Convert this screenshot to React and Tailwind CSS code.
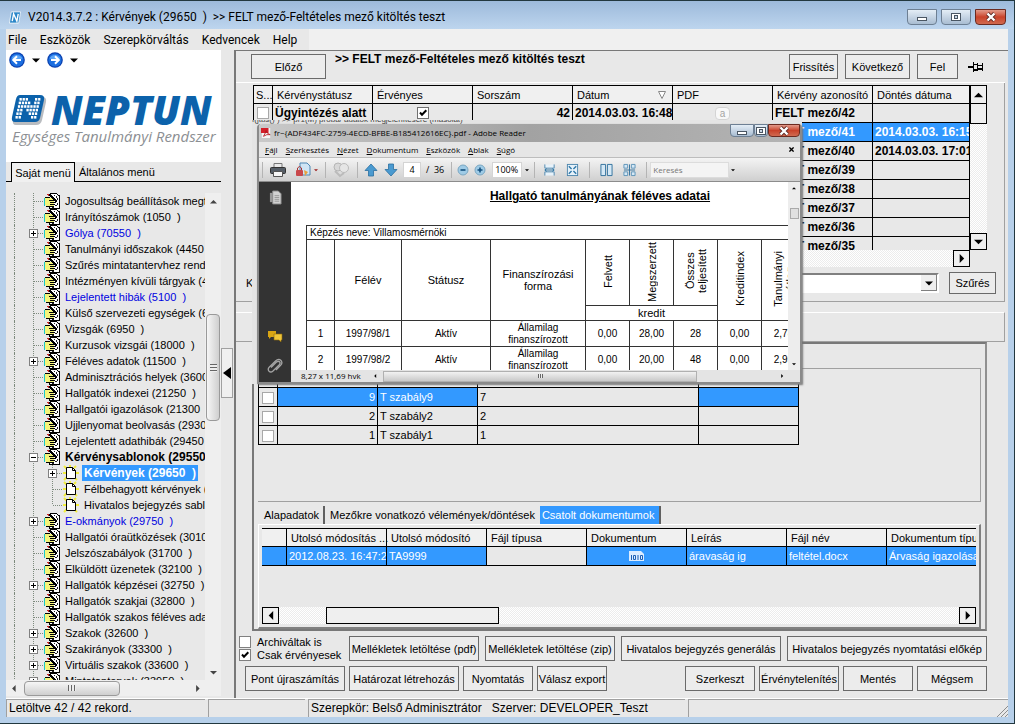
import React from "react";
import clsx from "clsx";

const TREE = [
  { label: "Jogosultság beállítások megtekintése (1000 )" },
  { label: "Irányítószámok (1050\u00a0 )" },
  { label: "Gólya (70550\u00a0 )", box: "plus", blue: true },
  { label: "Tanulmányi időszakok (4450\u00a0 )" },
  { label: "Szűrés mintatantervhez rendelt (4500 )" },
  { label: "Intézményen kívüli tárgyak (4700 )" },
  { label: "Lejelentett hibák (5100\u00a0 )", blue: true },
  { label: "Külső szervezeti egységek (6800 )" },
  { label: "Vizsgák (6950\u00a0 )" },
  { label: "Kurzusok vizsgái (18000\u00a0 )" },
  { label: "Féléves adatok (11500\u00a0 )", box: "plus" },
  { label: "Adminisztrációs helyek (3600\u00a0 )" },
  { label: "Hallgatók indexei (21250\u00a0 )" },
  { label: "Hallgatói igazolások (21300\u00a0 )" },
  { label: "Ujjlenyomat beolvasás (29300\u00a0 )" },
  { label: "Lejelentett adathibák (29450\u00a0 )" },
  { label: "Kérvénysablonok (29550\u00a0 )", box: "minus", bold: true },
  { label: "Kérvények (29650\u00a0 )", child: true, box: "plus", selected: true },
  { label: "Félbehagyott kérvények (29700 )", child: true },
  { label: "Hivatalos bejegyzés sablonok (29720 )", child: true, last: true },
  { label: "E-okmányok (29750\u00a0 )", box: "plus", blue: true },
  { label: "Hallgatói óraütközések (30100 )" },
  { label: "Jelszószabályok (31700\u00a0 )" },
  { label: "Elküldött üzenetek (32100\u00a0 )" },
  { label: "Hallgatók képzései (32750\u00a0 )", box: "plus" },
  { label: "Hallgatók szakjai (32800\u00a0 )" },
  { label: "Hallgatók szakos féléves adatai (32850 )" },
  { label: "Szakok (32600\u00a0 )", box: "plus" },
  { label: "Szakirányok (33300\u00a0 )", box: "plus" },
  { label: "Virtuális szakok (33600\u00a0 )", box: "plus" },
  { label: "Mintatantervek (33950\u00a0 )", box: "plus" },
];

const REQUESTS = [
  { id: 42, date: "2014.03.03. 16:48:12", decided: "" },
  { id: 41, date: "2014.03.03. 16:12:40", decided: "2014.03.03. 16:15:02", selected: true },
  { id: 40, date: "2014.03.03. 15:58:21", decided: "2014.03.03. 17:01:33" },
  { id: 39, date: "2014.03.03. 15:40:09", decided: "" },
  { id: 38, date: "2014.03.03. 15:22:51", decided: "" },
  { id: 37, date: "2014.03.03. 15:10:17", decided: "" },
  { id: 36, date: "2014.03.03. 14:55:30", decided: "" },
  { id: 35, date: "2014.03.03. 14:41:05", decided: "" },
];

const RULES = [
  { num: 9, name: "T szabály9", value: "7", selected: true },
  { num: 2, name: "T szabály2", value: "2" },
  { num: 1, name: "T szabály1", value: "1" },
];

const TERMS = [
  ["1", "1997/98/1", "Aktív", "0,00", "28,00", "28", "0,00", "2,78"],
  ["2", "1997/98/2", "Aktív", "0,00", "20,00", "48", "0,00", "2,95"],
];

const HATCH =
  "bg-[repeating-conic-gradient(#ffffff_0_25%,#ececec_0_50%)] bg-[length:2px_2px]";

const Button = ({ children, className, height = "h-[25px]" }) => (
  <button
    type="button"
    className={clsx(
      "shrink-0 whitespace-nowrap border border-[#6a6a6a] bg-[#ececec] text-center",
      height,
      className
    )}
  >
    {children}
  </button>
);

const Check = ({ id, label, defaultChecked, className }) => (
  <span className="relative inline-block h-3 w-3 shrink-0 align-middle">
    <input
      id={id}
      type="checkbox"
      aria-label={label}
      defaultChecked={defaultChecked}
      className={clsx("peer block h-3 w-3 appearance-none border bg-white", className)}
    />
    <svg
      viewBox="0 0 12 12"
      className="pointer-events-none absolute inset-0 hidden h-3 w-3 peer-checked:block"
    >
      <path d="M3 5.5 5 7.8 9.3 3.3" fill="none" stroke="#000" strokeWidth="2" />
    </svg>
  </span>
);

const Triangle = ({ dir, className, size = "h-[10px] w-[10px]" }) => (
  <svg viewBox="0 0 10 10" className={clsx("shrink-0", size, className)}>
    {dir === "up" && <path d="M0 8h10L5 3z" fill="currentColor" />}
    {dir === "down" && <path d="M0 3h10L5 8z" fill="currentColor" />}
    {dir === "left" && <path d="M8 0v10L3 5z" fill="currentColor" />}
    {dir === "right" && <path d="M3 0v10l5-5z" fill="currentColor" />}
  </svg>
);

const ScrollButton = ({ dir, label, className }) => (
  <button
    type="button"
    aria-label={label}
    className={clsx(
      "flex shrink-0 items-center justify-center border border-black bg-[#efefef]",
      className
    )}
  >
    <Triangle dir={dir} size="h-[9px] w-[9px]" />
  </button>
);

const WindowButtons = ({ small }) => {
  const box = small ? "h-[13px]" : "h-4";
  return (
    <div className={clsx("flex", small ? "" : "gap-1")}>
      <button
        type="button"
        aria-label="Kis méret"
        className={clsx(
          box,
          small ? "w-6" : "w-[30px]",
          "flex items-center justify-center rounded-b-sm border border-[#6d7f93] bg-linear-to-b from-[#e4edf6] to-[#a9bdd2]"
        )}
      >
        <svg viewBox="0 0 12 10" className="h-[10px] w-3">
          <rect x="1.5" y="5.5" width="9" height="3" fill="#fff" stroke="#4a5663" />
        </svg>
      </button>
      <button
        type="button"
        aria-label="Teljes méret"
        className={clsx(
          box,
          small ? "w-[14px]" : "w-[30px]",
          "flex items-center justify-center rounded-b-sm border border-[#6d7f93] bg-linear-to-b from-[#e4edf6] to-[#a9bdd2]"
        )}
      >
        <svg viewBox="0 0 12 10" className="h-[10px] w-3">
          <rect x="1.5" y="1.5" width="9" height="7" fill="#fff" stroke="#4a5663" />
          <rect x="4.5" y="3.5" width="3" height="3" fill="#c9d6e4" stroke="#4a5663" />
        </svg>
      </button>
      <button
        type="button"
        aria-label="Bezárás"
        className={clsx(
          box,
          small ? "w-8" : "w-[31px]",
          "flex items-center justify-center rounded-b-sm border border-[#6b2a20] bg-linear-to-b from-[#e19a8b] via-[#c9422a] to-[#d0694f]"
        )}
      >
        <svg viewBox="0 0 12 10" className="h-[10px] w-3">
          <path d="m2.500 1.500 7 7m0-7-7 7" stroke="#5c2a26" strokeWidth="4" />
          <path d="m2.500 1.500 7 7m0-7-7 7" stroke="#fff" strokeWidth="2.400" />
        </svg>
      </button>
    </div>
  );
};

const DOTS = [
  "1110011",
  "1111011",
  "1111111",
  "1101111",
  "1100111",
  "1100011",
];

const NeptunMark = ({ className }) => (
  <svg viewBox="0 0 36 32" className={className}>
    <path d="M10 3h21q5 0 4 5l-4 18q-1 5-6 5H5q-4 0-3-5L6 8q1-5 4-5z" fill="#b9bcc0" />
    <path d="M9 1h20q5 0 4 5l-4 18q-1 4-5 4H4q-4 0-3-5L5 5q1-4 4-4z" fill="#0c62ab" />
    {DOTS.map((row, r) =>
      row
        .split("")
        .map((on, c) =>
          on === "1" ? (
            <rect
              key={`${r}-${c}`}
              x={8.5 + c * 3.1 - r * 0.8}
              y={4 + r * 3.6}
              width="2.300"
              height="2.600"
              fill="#fff"
            />
          ) : null
        )
    )}
  </svg>
);

const NavArrow = ({ dir, label }) => (
  <button type="button" aria-label={label} className="h-4 w-4">
    <svg viewBox="0 0 16 16" className="h-4 w-4">
      <circle cx="8" cy="8" r="7.800" fill="#0a3fae" />
      <circle cx="8" cy="8" r="6.600" fill="#1c6fe0" />
      <path d="M2.500 6.500a6 6 0 0 1 11 0q-5 2-11 0z" fill="#5aa3f5" />
      <path
        d={dir === "left" ? "M12 8H4.500M8 4.200 4.200 8 8 11.800" : "M4 8h7.500M8 4.200 11.800 8 8 11.800"}
        fill="none"
        stroke="#fff"
        strokeWidth="2"
      />
    </svg>
  </button>
);

const HandIcon = () => (
  <svg viewBox="0 0 16 16" shapeRendering="crispEdges" className="h-4 w-4 shrink-0">
    <path d="M7 1h6v2h2v12H6v-3h1z" fill="#fff" />
    <path d="M6 0h7v1H6zM13 1h1v1h-1zM14 2h2v1h-2zM15 3h1v12h-1zM5 15h11v1H5zM5 13h1v2H5z" fill="#000" />
    <path d="M1 5h7v1h2v7H2v-1H1z" fill="#f4f47a" />
    <path d="M0 5h1v8H0z" fill="#19c8c8" />
    <path d="M2 13h8v1H2zM1 4h5v1H1zM5 7h5v1H5zM6 9h6v1H6zM6 11h5v1H6z" fill="#000" />
    <path d="M5 1h2v1h1v1h1v1h1v1h1v1h1v1h1v2h-2V8h-1V7H9V6H8V5H7V4H6V3H5z" fill="#000" />
    <path d="M3 1h2v1H3zM4 2h1v1H4z" fill="#c22" />
    <path d="M10 2h1v1h-1zM12 3h1v2h-1zM13 5h1v2h-1zM11 12h2v1h-2zM13 10h1v2h-1zM8 14h2v1H8z" fill="#222" />
  </svg>
);

const PageIcon = () => (
  <svg viewBox="0 0 16 16" className="h-4 w-4 shrink-0">
    <path d="M1 1l3 3M13 1l-2 2M0 8h3M12 8h4M1 15l3-3M14 15l-2-2M7 0v2" stroke="#f2ee3a" strokeWidth="2" />
    <path d="M3.500 2.500h6l3 3v8h-9z" fill="#fff" stroke="#000" />
    <path d="M9.500 2.500v3h3" fill="none" stroke="#000" />
  </svg>
);

const Branch = ({ box, last, through }) => (
  <svg viewBox="0 0 16 16" shapeRendering="crispEdges" className="h-4 w-4 shrink-0">
    <path d={last ? "M5.500 0v8" : "M5.500 0v16"} stroke="#7d8a7d" strokeDasharray="1 1" />
    {!through && <path d="M6 8.500h10" stroke="#7d8a7d" strokeDasharray="1 1" />}
    {box && <rect x="1.500" y="4.500" width="8" height="8" fill="#fff" stroke="#808080" />}
    {box && <path d="M3 8.500h5" stroke="#000" />}
    {box === "plus" && <path d="M5.500 6v5" stroke="#000" />}
  </svg>
);

const TreeRow = ({ item }) => (
  <li className="flex h-4 items-center whitespace-nowrap">
    <span className="h-4 w-[9px] shrink-0 border-r border-dotted border-[#7d8a7d]" />
    <span className="w-[13px] shrink-0" />
    <Branch box={item.child ? null : item.box} through={item.child} />
    {item.child && (
      <span className="flex shrink-0 pl-[3px]">
        <Branch box={item.box} last={item.last} />
      </span>
    )}
    {item.child ? <PageIcon /> : <HandIcon />}
    <a
      href="#"
      className={clsx(
        "ml-[3px] px-[2px] leading-4",
        item.blue && "text-[#0000e0]",
        item.bold && "text-[12px] font-bold",
        item.selected && "bg-[#3399ff] text-[12px] font-bold text-white"
      )}
    >
      {item.label}
    </a>
  </li>
);

const Sidebar = () => (
  <aside className="flex w-[215px] shrink-0 flex-col">
    <div className="h-[112px] shrink-0 bg-white">
      <div className="flex items-center pl-[3px] pt-[2px]">
        <NavArrow dir="left" label="Vissza" />
        <Triangle dir="down" size="h-2 w-2" className="ml-[7px] mr-[7px]" />
        <NavArrow dir="right" label="Előre" />
        <Triangle dir="down" size="h-2 w-2" className="ml-[7px]" />
      </div>
      <div className="mt-6 flex h-9 items-center pl-[5px]">
        <NeptunMark className="h-8 w-9" />
        <span className="ml-1 font-['Open_Sans'] text-[40px] font-extrabold italic leading-9 text-[#0c62ab]">
          NEPTUN
        </span>
      </div>
      <p className="whitespace-nowrap pl-[6px] font-['Open_Sans'] text-[15px] italic leading-4 text-[#8c8f93]">
        Egységes Tanulmányi Rendszer
      </p>
    </div>
    <div className="flex h-5 shrink-0">
      <span className="w-[5px] border-b border-black" />
      <button type="button" className="w-[64px] whitespace-nowrap border-x border-t border-black bg-[#f0f0f0]">
        Saját menü
      </button>
      <button type="button" className="flex-1 border-b border-black pl-1 text-left">
        Általános menü
      </button>
    </div>
    <div className="mt-[11px] flex min-h-0 flex-1">
      <ul className="min-w-0 flex-1 overflow-hidden">
        {TREE.map((item) => (
          <TreeRow key={item.label} item={item} />
        ))}
      </ul>
      <div className="flex w-4 shrink-0 flex-col items-center bg-[#efefef]">
        <Triangle dir="up" size="h-[7px] w-[7px]" className="mt-[5px] text-[#444]" />
        <div className="mt-[109px] flex h-[107px] w-[14px] items-center justify-center rounded-sm border border-[#9a9a9a] bg-linear-to-r from-[#f6f6f6] to-[#cfcfcf]">
          <span className="h-2 w-[7px] bg-[repeating-linear-gradient(#666_0_1px,#eee_1px_3px)]" />
        </div>
        <Triangle dir="down" size="h-[7px] w-[7px]" className="mb-1 mt-auto text-[#444]" />
      </div>
    </div>
    <div className="mb-[2px] flex h-4 shrink-0 items-center bg-[#efefef] pr-5">
      <Triangle dir="left" size="h-[7px] w-[7px]" className="ml-1 text-[#444]" />
      <div className="ml-[7px] flex h-[15px] w-24 items-center justify-center rounded-sm border border-[#9a9a9a] bg-linear-to-b from-[#f6f6f6] to-[#cfcfcf]">
        <span className="h-[6px] w-2 bg-[repeating-linear-gradient(90deg,#666_0_1px,#eee_1px_3px)]" />
      </div>
      <Triangle dir="right" size="h-[7px] w-[7px]" className="ml-auto text-[#444]" />
    </div>
  </aside>
);

const Splitter = () => (
  <div className="w-[13px] shrink-0 pt-[298px]">
    <button
      type="button"
      aria-label="Menü elrejtése"
      className="flex h-[50px] w-3 items-center justify-center border border-[#a0a0a0] bg-[#f0f0f0]"
    >
      <svg viewBox="0 0 8 12" className="h-3 w-2">
        <path d="M8 0v12L0 6z" />
      </svg>
    </button>
  </div>
);

const TH = "border-b border-r border-black bg-[#f0f0f0] pl-1 text-left font-normal";
const TD = "overflow-hidden whitespace-nowrap border-b border-r border-black px-[2px]";

const RequestGrid = () => (
  <div className="ml-[7px] mr-[9px] border-l border-black">
    <div className="flex h-[165px]">
      <div className="min-w-0 flex-1 overflow-hidden border-t border-black">
        <table className="w-full table-fixed border-separate border-spacing-0">
          <colgroup>
            <col className="w-[19px]" />
            <col className="w-[100px]" />
            <col className="w-[100px]" />
            <col className="w-[100px]" />
            <col className="w-[100px]" />
            <col className="w-[100px]" />
            <col className="w-[100px]" />
            <col />
          </colgroup>
          <thead>
            <tr className="h-[18px] whitespace-nowrap">
              <th className="border-b border-r border-black bg-[#f0f0f0] px-[2px] text-left font-normal">
                S...
              </th>
              <th className={TH}>Kérvénystátusz</th>
              <th className={TH}>Érvényes</th>
              <th className={TH}>Sorszám</th>
              <th className={TH}>
                <span className="flex items-center justify-between pr-[6px]">
                  Dátum
                  <svg viewBox="0 0 8 8" className="h-2 w-2">
                    <path d="M.5.5h7l-3.500 7z" fill="#fff" stroke="#888" />
                  </svg>
                </span>
              </th>
              <th className={TH}>PDF</th>
              <th className={TH}>Kérvény azonosító</th>
              <th className={TH}>Döntés dátuma</th>
            </tr>
          </thead>
          <tbody>
            {REQUESTS.map((r) => (
              <tr
                key={r.id}
                className={clsx(
                  "h-[19px] text-[12px] font-bold",
                  r.selected && "bg-[#3399ff] text-white"
                )}
              >
                <td className={clsx(TD, "text-center leading-3")}>
                  <Check label={`Kijelölés ${r.id}`} className="border-[#a8a8a8]" />
                </td>
                <td className={TD}>Ügyintézés alatt</td>
                <td className={clsx(TD, "text-center leading-3")}>
                  <Check label={`Érvényes ${r.id}`} defaultChecked className="border-[#707070]" />
                </td>
                <td className={clsx(TD, "text-right")}>{r.id}</td>
                <td className={TD}>{r.date}</td>
                <td className={clsx(TD, "text-center leading-3")}>
                  <span className="inline-block h-[13px] w-[15px] rounded-sm border border-[#d4d4d4] bg-[#f8f8f8] align-middle text-[10px] font-normal leading-[11px] text-[#a4a4a4]">
                    a
                  </span>
                </td>
                <td className={TD}>FELT mező/{r.id}</td>
                <td className={TD}>{r.decided}</td>
              </tr>
            ))}
          </tbody>
        </table>
      </div>
      <div className={clsx("flex w-[17px] shrink-0 flex-col", HATCH)}>
        <ScrollButton dir="up" label="Fel" className="h-[19px]" />
        <div className="h-5 border-x border-b border-black bg-[#efefef]" />
        <ScrollButton dir="down" label="Le" className="mt-auto h-[17px]" />
      </div>
    </div>
    <div className="flex h-[17px]">
      <div className={clsx("flex flex-1 justify-between", HATCH)}>
        <ScrollButton dir="left" label="Balra" className="w-[17px]" />
        <ScrollButton dir="right" label="Jobbra" className="w-[17px]" />
      </div>
      <div className="w-[17px]" />
    </div>
  </div>
);

const RulesGrid = () => (
  <table className="w-[541px] table-fixed border-separate border-spacing-0 border-l border-black">
    <colgroup>
      <col className="w-[19px]" />
      <col className="w-[100px]" />
      <col className="w-[100px]" />
      <col className="w-[221px]" />
      <col className="w-[100px]" />
    </colgroup>
    <thead>
      <tr className="h-[19px]">
        <th className={TH}></th>
        <th className={TH}></th>
        <th className={TH}></th>
        <th className={TH}></th>
        <th className={TH}></th>
      </tr>
    </thead>
    <tbody>
      {RULES.map((r) => (
        <tr key={r.num} className="h-[19px]">
          <td className={clsx(TD, "text-center leading-3")}>
            <Check label={`Kijelölés ${r.name}`} className="border-[#a8a8a8]" />
          </td>
          <td className={clsx(TD, "text-right", r.selected && "bg-[#3399ff] text-white")}>{r.num}</td>
          <td className={clsx(TD, r.selected && "bg-[#3399ff] text-white")}>{r.name}</td>
          <td className={TD}>{r.value}</td>
          <td className={clsx(TD, r.selected && "bg-[#3399ff]")}></td>
        </tr>
      ))}
    </tbody>
  </table>
);

const DocumentGrid = () => (
  <div className="flex h-24 flex-col">
    <table className="w-full table-fixed border-separate border-spacing-0 border-t border-black">
      <colgroup>
        <col className="w-[25px]" />
        <col className="w-[100px]" />
        <col className="w-[100px]" />
        <col className="w-[100px]" />
        <col className="w-[100px]" />
        <col className="w-[100px]" />
        <col className="w-[100px]" />
        <col />
      </colgroup>
      <thead>
        <tr className="h-[18px] whitespace-nowrap">
          <th className={TH}></th>
          <th className={TH}>Utolsó módosítás ...</th>
          <th className={TH}>Utolsó módosító</th>
          <th className={TH}>Fájl típusa</th>
          <th className={TH}>Dokumentum</th>
          <th className={TH}>Leírás</th>
          <th className={TH}>Fájl név</th>
          <th className="overflow-hidden border-b border-black bg-[#f0f0f0] pl-1 text-left font-normal">
            Dokumentum típu...
          </th>
        </tr>
      </thead>
      <tbody>
        <tr className="h-[19px] bg-[#3399ff] text-white">
          <td className={TD}></td>
          <td className={TD}>2012.08.23. 16:47:25</td>
          <td className={TD}>TA9999</td>
          <td className={clsx(TD, "bg-[#e8e8e8]")}></td>
          <td className={TD}>
            <svg viewBox="0 0 16 12" className="mx-auto h-3 w-4">
              <path d="M0 1h12l3 3v7H0z" fill="#dcecff" />
              <path
                d="M2.500 5v5M4.500 5.500h2v4h-2zM9 5v5M11.500 5.500h2v4h-2z"
                fill="none"
                stroke="#1d5fb4"
              />
            </svg>
          </td>
          <td className={TD}>áravaság ig</td>
          <td className={TD}>feltétel.docx</td>
          <td className="overflow-hidden whitespace-nowrap border-b border-black pl-[2px]">
            Árvaság igazolása
          </td>
        </tr>
      </tbody>
    </table>
    <div className={clsx("mt-auto flex h-[17px]", HATCH)}>
      <ScrollButton dir="left" label="Balra" className="w-[17px]" />
      <div className="ml-[47px] w-[173px] border border-black bg-[#efefef]" />
      <ScrollButton dir="right" label="Jobbra" className="ml-auto w-[17px]" />
    </div>
  </div>
);

const PinIcon = () => (
  <svg viewBox="0 0 16 12" shapeRendering="crispEdges" className="h-3 w-4">
    <path d="M0 5h5v2H0zM5 1h1v10H5zM6 3h3v1H6zM6 8h3v2H6zM9 2h1v8H9zM10 4h4v1h-4zM10 7h4v2h-4zM14 2h1v8h-1z" />
  </svg>
);

const Main = () => (
  <main className="flex min-w-0 flex-1 flex-col border-l-2 border-t border-[#787878]">
    <div className="mr-[3px] flex h-8 shrink-0 items-start border-b border-white pl-[15px] pt-[3px]">
      <Button className="w-[75px]">Előző</Button>
      <h1 className="ml-[9px] text-[12px] font-bold leading-[10px]">
        &gt;&gt; FELT mező-Feltételes mező kitöltés teszt
      </h1>
      <div className="ml-auto flex items-center gap-[7px] pr-[21px]">
        <Button className="w-[49px]">Frissítés</Button>
        <Button className="w-[65px]">Következő</Button>
        <Button className="w-[41px]">Fel</Button>
        <button type="button" aria-label="Rögzítés" className="ml-[3px]">
          <PinIcon />
        </button>
      </div>
    </div>
    <section className="mr-[3px] shrink-0 border-b border-r border-[#a0a0a0] pb-[7px] pl-[10px] pr-2 pt-[2px]">
      <RequestGrid />
      <div className="mt-[5px] flex items-center">
        <label htmlFor="search" className="w-14">
          Keresés
        </label>
        <span className="relative flex-1">
          <select
            id="search"
            className="block h-5 w-full appearance-none border-2 border-b-white border-l-[#808080] border-r-white border-t-[#808080] bg-white"
          />
          <span className="pointer-events-none absolute bottom-[2px] right-[2px] top-[2px] flex w-4 items-center justify-center border-b border-r border-[#808080] bg-[#efefef]">
            <Triangle dir="down" size="h-2 w-2" />
          </span>
        </span>
        <Button className="ml-[10px] w-[47px]" height="h-[22px]">
          Szűrés
        </Button>
      </div>
    </section>
    <section className="mr-[3px] mt-[10px] h-[30px] shrink-0 border-b border-r border-t border-[#a0a0a0] border-t-white" />
    <section className="ml-4 mr-[21px] flex min-h-0 flex-1 flex-col border-2 border-[#787878] border-r-[#909090] px-1 pt-6">
      <div className="min-h-0 flex-1 overflow-hidden border border-[#a0a0a0] border-l-0">
        <RulesGrid />
      </div>
      <div className="mt-1 flex h-[18px] shrink-0 items-stretch">
        <button type="button" className="border-r-2 border-[#606060] pl-[6px] pr-1">
          Alapadatok
        </button>
        <button type="button" className="px-[5px]">
          Mezőkre vonatkozó vélemények/döntések
        </button>
        <button
          type="button"
          className="w-[121px] border-r-2 border-[#606060] bg-[#3399ff] px-[2px] text-left text-white"
        >
          Csatolt dokumentumok
        </button>
      </div>
      <div className="shrink-0 border border-b-2 border-r-2 border-[#808080] border-l-white border-t-white p-[3px]">
        <DocumentGrid />
      </div>
    </section>
    <footer className="mt-[5px] flex shrink-0 flex-col gap-[5px] pb-[7px] pl-[3px] pr-[21px]">
      <div className="flex">
        <div className="flex w-[110px] shrink-0 flex-col justify-between whitespace-nowrap">
          <label htmlFor="archived" className="flex h-3 items-center gap-[6px]">
            <Check id="archived" label="Archiváltak is" className="border-[#808080]" />
            Archiváltak is
          </label>
          <label htmlFor="valid" className="flex h-3 items-center gap-[6px]">
            <Check id="valid" label="Csak érvényesek" defaultChecked className="border-[#808080]" />
            Csak érvényesek
          </label>
        </div>
        <div className="flex flex-1 justify-between">
          <Button className="w-[130px]">Mellékletek letöltése (pdf)</Button>
          <Button className="w-[130px]">Mellékletek letöltése (zip)</Button>
          <Button className="w-[160px]">Hivatalos bejegyzés generálás</Button>
          <Button className="w-[200px]">Hivatalos bejegyzés nyomtatási előkép</Button>
        </div>
      </div>
      <div className="flex gap-1 pl-[6px]">
        <Button className="w-[100px]">Pont újraszámítás</Button>
        <Button className="w-[110px]">Határozat létrehozás</Button>
        <Button className="w-[70px]">Nyomtatás</Button>
        <Button className="w-[70px]">Válasz export</Button>
        <Button className="ml-auto w-[70px]">Szerkeszt</Button>
        <Button className="w-[80px]">Érvénytelenítés</Button>
        <Button className="w-[70px]">Mentés</Button>
        <Button className="w-[70px]">Mégsem</Button>
      </div>
    </footer>
  </main>
);

const PDF_MENU = ["Fájl", "Szerkesztés", "Nézet", "Dokumentum", "Eszközök", "Ablak", "Súgó"];

const BigArrow = ({ up }) => (
  <svg viewBox="0 0 14 14" className="h-[14px] w-[14px]">
    <path
      d={up ? "M7 1l6 6.500H9.500V13h-5V7.500H1z" : "M7 13l6-6.500H9.500V1h-5v5.500H1z"}
      fill="#4a9ad0"
      stroke="#2b6f9f"
      strokeWidth=".8"
    />
  </svg>
);

const ZoomDot = ({ plus }) => (
  <svg viewBox="0 0 12 12" className="h-3 w-3">
    <circle cx="6" cy="6" r="5" fill="#9fcbe6" stroke="#7ba7c2" />
    <path d={plus ? "M3.500 6h5M6 3.500v5" : "M3.500 6h5"} stroke="#14507f" strokeWidth="1.600" />
  </svg>
);

const Divider = () => <span className="h-4 border-l border-[#b4b4b4]" />;

const PdfToolbar = () => (
  <div className="flex h-6 items-center border-b border-[#8c8c8c] bg-linear-to-b from-[#f4f4f4] to-[#cfcfcf] pl-[3px] text-[9px]">
    <Divider />
    <button type="button" aria-label="Nyomtatás" className="ml-[7px]">
      <svg viewBox="0 0 16 14" className="h-[14px] w-4">
        <path d="M4 .5h8V5H4z" fill="#e9e9e9" stroke="#777" />
        <rect x=".5" y="4.500" width="15" height="6" rx="1" fill="#555d66" stroke="#333" />
        <path d="M3.500 8.500h9v5h-9z" fill="#f7f7f7" stroke="#555" />
      </svg>
    </button>
    <button type="button" aria-label="Megosztás" className="ml-[9px] flex items-center gap-[3px]">
      <svg viewBox="0 0 16 16" className="h-4 w-4">
        <path d="M5 1h7l3 3v9H5z" fill="#cfe4f5" stroke="#4f87b5" />
        <rect x="1" y="8" width="7" height="6" rx="1" fill="#c9484b" />
        <path d="M2.500 8V6q2-3 4 0v2" fill="none" stroke="#a33" />
        <path d="M9 8l4 2-3 4z" fill="#e8a33c" />
      </svg>
      <Triangle dir="down" size="h-1 w-1" className="text-[#9a1c1c]" />
    </button>
    <span className="ml-[7px]" />
    <Divider />
    <button type="button" aria-label="Gyűjtemény" className="ml-[6px]">
      <svg viewBox="0 0 18 16" className="h-4 w-[18px]">
        <circle cx="6" cy="5" r="4" fill="#d8d8d8" stroke="#b5b5b5" />
        <circle cx="12" cy="6" r="4.500" fill="#e6e6e6" stroke="#bbb" />
        <path d="M3 9l5 5 4-3" fill="none" stroke="#bbb" strokeWidth="2" />
      </svg>
    </button>
    <span className="ml-[7px]" />
    <Divider />
    <div className="ml-[6px] flex items-center gap-[6px]">
      <button type="button" aria-label="Előző oldal">
        <BigArrow up />
      </button>
      <button type="button" aria-label="Következő oldal">
        <BigArrow />
      </button>
    </div>
    <input
      aria-label="Oldal"
      defaultValue="4"
      className="ml-[5px] h-4 w-[18px] border border-[#d4d4d4] bg-white text-center"
    />
    <span className="ml-[5px] whitespace-nowrap">/&nbsp; 36</span>
    <span className="ml-[7px]" />
    <Divider />
    <button type="button" aria-label="Kicsinyítés" className="ml-[5px]">
      <ZoomDot />
    </button>
    <button type="button" aria-label="Nagyítás" className="ml-[5px]">
      <ZoomDot plus />
    </button>
    <select
      aria-label="Nagyítás mértéke"
      className="ml-[6px] h-4 w-[30px] appearance-none border border-[#d4d4d4] bg-white px-[2px] text-[9px]"
    >
      <option>100%</option>
    </select>
    <Triangle dir="down" size="h-1 w-1" className="ml-[3px]" />
    <span className="ml-[5px]" />
    <Divider />
    <div className="ml-[8px] flex items-center gap-[10px]">
      <svg viewBox="0 0 14 14" className="h-[14px] w-[13px]">
        <path d="M2 1v4h10V1M2 13V9h10v4" fill="#e7f2fa" stroke="#4d86ad" />
        <path d="M2 7h10M4 5.500 2 7l2 1.500M10 5.500 12 7l-2 1.500" fill="none" stroke="#2f77a8" />
      </svg>
      <svg viewBox="0 0 14 14" className="h-[14px] w-[13px]">
        <rect x="1.500" y="1" width="11" height="12" fill="#e7f2fa" stroke="#4d86ad" />
        <path d="M3 3l3 3M11 3 8 6M3 11l3-3M11 11 8 8" stroke="#2f77a8" strokeWidth="1.500" />
      </svg>
      <Divider />
      <svg viewBox="0 0 14 14" className="h-[14px] w-[13px]">
        <path d="M1 1h5v12H1zM8 1h5v12H8z" fill="#d5e8f5" stroke="#2f6f9c" />
      </svg>
      <svg viewBox="0 0 14 14" className="h-[14px] w-[13px]">
        <path d="M1 1h4v4H1zM9 1h4v4H9zM1 9h4v4H1zM9 9h4v4H9z" fill="#d5e8f5" stroke="#5c93b8" />
        <path d="M1 7h12M7 1v12" stroke="#2f6f9c" />
      </svg>
      <Divider />
    </div>
    <input
      aria-label="Keresés"
      placeholder="Keresés"
      className="ml-[3px] h-4 w-[79px] border border-[#dcdcdc] bg-[#f4f4f4] px-[2px] text-[8px] placeholder:text-[#777]"
    />
    <Triangle dir="down" size="h-1 w-1" className="ml-[2px]" />
  </div>
);

const PCELL = "border-b border-r border-[#333] p-0 text-center font-normal";
const UPRIGHT = "inline-block rotate-180 whitespace-nowrap leading-3 [writing-mode:vertical-rl]";

const PdfPage = () => (
  <div className="min-w-0 flex-1 overflow-hidden bg-white">
    <div className="ml-[15px] w-[588px]">
      <h2 className="pt-[6px] text-center text-[12px] font-bold leading-4 underline">
        Hallgató tanulmányának féléves adatai
      </h2>
      <table className="mt-[21px] w-full table-fixed border-separate border-spacing-0 border-l border-t border-[#333] text-[10px] leading-3">
        <colgroup>
          <col className="w-[28px]" />
          <col className="w-[67px]" />
          <col className="w-[89px]" />
          <col className="w-[95px]" />
          <col className="w-[44px]" />
          <col className="w-[44px]" />
          <col className="w-[44px]" />
          <col className="w-[44px]" />
          <col className="w-[44px]" />
          <col />
        </colgroup>
        <thead>
          <tr className="h-[14px]">
            <th
              colSpan={10}
              className="border-b border-r border-[#333] py-0 pl-[3px] text-left font-normal"
            >
              Képzés neve: Villamosmérnöki
            </th>
          </tr>
          <tr className="h-[66px] text-[11px]">
            <th rowSpan={2} className={PCELL}></th>
            <th rowSpan={2} className={PCELL}>Félév</th>
            <th rowSpan={2} className={PCELL}>Státusz</th>
            <th rowSpan={2} className={PCELL}>Finanszírozási<br />forma</th>
            <th className={PCELL}><span className={UPRIGHT}>Felvett</span></th>
            <th className={PCELL}><span className={UPRIGHT}>Megszerzett</span></th>
            <th className={PCELL}>
              <span className={UPRIGHT}>Összes<br />teljesített</span>
            </th>
            <th rowSpan={2} className={PCELL}><span className={UPRIGHT}>Kreditindex</span></th>
            <th rowSpan={2} className={PCELL}>
              <span className={UPRIGHT}>Tanulmányi<br />átlag</span>
            </th>
            <th rowSpan={2} className={PCELL}></th>
          </tr>
          <tr className="h-[15px] text-[11px]">
            <th colSpan={3} className={PCELL}>kredit</th>
          </tr>
        </thead>
        <tbody>
          {TERMS.map((t) => (
            <tr key={t[0]} className="h-[26px]">
              <td className={PCELL}>{t[0]}</td>
              <td className={PCELL}>{t[1]}</td>
              <td className={PCELL}>{t[2]}</td>
              <td className={PCELL}>Államilag<br />finanszírozott</td>
              {t.slice(3).map((v, i) => (
                <td key={i} className={PCELL}>{v}</td>
              ))}
              <td className={PCELL}></td>
            </tr>
          ))}
        </tbody>
      </table>
    </div>
  </div>
);

const PdfWindow = () => (
  <div className="absolute left-[252px] top-[119px] w-[550px] bg-[#e4e4e4]">
    <div className="flex h-1 items-end overflow-hidden whitespace-nowrap text-[8px] leading-[8px] text-[#444]">
      f(jtbs() ) &gt;&gt; pr1(M) próba/ adatok megjelenítésére (másolat)
    </div>
    <div className="ml-[5px] flex flex-col rounded-t border-b-2 border-l-2 border-r-2 border-[#8a8a8a] font-['Open_Sans'] shadow-[1px_1px_2px_#777]">
      <div className="flex h-[18px] items-center rounded-t bg-linear-to-r from-[#c9c9c9] via-[#a2a2a2] to-[#b4b4b4] pl-[2px] text-black">
        <svg viewBox="0 0 12 12" className="h-[10px] w-[10px]">
          <path d="M1 0h10v12H1z" fill="#f5f5f5" />
          <path d="M0 0h9v6H0z" fill="#d3202a" />
          <path d="M3 10q3-5 3-7 1 4 5 5-4-1-8 2" fill="none" stroke="#b3131c" />
        </svg>
        <span className="ml-[3px] whitespace-nowrap text-[8px]">
          fr~&#123;ADF434FC-2759-4ECD-BFBE-B185412616EC&#125;.pdf - Adobe Reader
        </span>
        <div className="ml-auto self-start">
          <WindowButtons small />
        </div>
      </div>
      <div className="flex h-4 items-center gap-2 border-b border-[#bdbdbd] bg-[#e6e6e6] px-[6px] text-[8px]">
        {PDF_MENU.map((m) => (
          <button key={m} type="button" className="whitespace-nowrap">
            <u>{m[0]}</u>
            {m.slice(1)}
          </button>
        ))}
        <button type="button" aria-label="Dokumentum bezárása" className="ml-auto">
          <svg viewBox="0 0 6 6" className="h-[5px] w-[5px]">
            <path d="m.5.5 5 5m0-5-5 5" stroke="#000" strokeWidth="1.600" />
          </svg>
        </button>
      </div>
      <PdfToolbar />
      <div className="flex h-[200px]">
        <div className="flex w-8 shrink-0 flex-col items-center bg-[#333]">
          <svg viewBox="0 0 14 16" className="mt-2 h-[15px] w-[13px]">
            <path d="M1 3h8v10H1z" fill="#999" />
            <path d="M4 1h6l3 3v11H4z" fill="#d2d2d2" stroke="#888" />
            <path d="M6 6h5M6 8h5M6 10h5M6 12h5" stroke="#888" strokeWidth=".8" />
          </svg>
          <svg viewBox="0 0 16 12" className="mt-auto h-3 w-4">
            <path d="M1 1h8v6H4L2 9V7H1z" fill="#d9a514" />
            <path d="M7 4h8v6h-1v2l-2-2H7z" fill="#f0c63a" stroke="#8d6a0c" strokeWidth=".6" />
          </svg>
          <svg viewBox="0 0 16 16" className="mb-2 mt-4 h-4 w-4">
            <path
              d="M4 9.500 9.500 4q2-1.500 3.200 0 1 1.200-.4 2.800L6 13q-2.200 2-4 .2-1.600-1.900.2-4L8.500 3q3-2.800 5.500-.6 2 2.600-.4 5L9 12"
              fill="none"
              stroke="#a5a5a5"
              strokeWidth="1.300"
            />
          </svg>
        </div>
        <div className="flex min-w-0 flex-1 flex-col">
          <div className="flex h-[188px] font-['Liberation_Sans',Arial,sans-serif]">
            <PdfPage />
            <div className="flex w-3 shrink-0 flex-col items-center bg-[#ededed]">
              <Triangle dir="up" size="h-1 w-1" className="mt-1" />
              <div className="mt-[18px] h-[11px] w-[9px] border border-[#aaa] bg-[#e0e0e0]" />
              <Triangle dir="down" size="h-1 w-1" className="mb-1 mt-auto" />
            </div>
          </div>
          <div className="flex h-3 items-center bg-[#e4e4e4] pl-[10px] text-[8px]">
            <span className="w-[72px] whitespace-nowrap">8,27 x 11,69 hvk</span>
            <Triangle dir="left" size="h-1 w-1" />
            <div className="ml-[6px] flex h-[11px] w-[314px] items-center justify-center border border-[#b0b0b0] bg-linear-to-b from-[#f2f2f2] to-[#c9c9c9]">
              <span className="h-1 w-[5px] bg-[repeating-linear-gradient(90deg,#666_0_1px,#eee_1px_2px)]" />
            </div>
            <Triangle dir="right" size="h-1 w-1" className="ml-auto mr-4" />
          </div>
        </div>
      </div>
    </div>
  </div>
);

const MENU = ["File", "Eszközök", "Szerepkörváltás", "Kedvencek", "Help"];

const App = () => {
  return (
    <div className="relative flex h-screen flex-col overflow-hidden border-b border-r border-t border-[#22383f] bg-[#b7d0ea] font-['Liberation_Sans',Arial,sans-serif] text-[11px] leading-[14px] text-black">
      <header className="flex h-7 shrink-0 items-center bg-linear-to-b from-[#9dbadb] to-[#bdd5ee] px-2 pt-[4px] font-['Roboto'] text-[12px]">
        <svg viewBox="0 0 14 14" className="h-[13px] w-[14px]">
          <path d="M3 1h10l-2 12H1z" fill="#2a86c8" stroke="#fff" strokeWidth=".8" />
          <path d="m4 11 1.500-8 3.500 8L10.500 3" fill="none" stroke="#fff" strokeWidth="1.500" />
        </svg>
        <span className="ml-[6px] flex-1 whitespace-nowrap">
          V2014.3.7.2 : Kérvények (29650&nbsp; )&nbsp; &gt;&gt; FELT mező-Feltételes mező kitöltés teszt
        </span>
        <WindowButtons />
      </header>
      <div className="mx-[6px] mb-[6px] flex min-h-0 flex-1 flex-col bg-[#e8e8e8]">
        <nav className="flex h-[21px] shrink-0 bg-[#f0f0f0] font-['Roboto'] text-[12px]">
          <div className="flex items-center gap-[13px] bg-[#e8e8e8] pl-[2px] pr-3">
            {MENU.map((m) => (
              <button key={m} type="button">
                {m}
              </button>
            ))}
          </div>
        </nav>
        <div className="flex min-h-0 flex-1">
          <Sidebar />
          <Splitter />
          <Main />
        </div>
        <div className="flex h-[19px] shrink-0 gap-[3px] border-t border-white text-[12px]">
          <span className="w-[199px] border-l border-t border-[#a0a0a0] pl-[2px] leading-4">
            Letöltve 42 / 42 rekord.
          </span>
          <span className="w-[97px] border-l border-t border-[#a0a0a0]" />
          <span className="w-[377px] whitespace-nowrap border-l border-t border-[#a0a0a0] pl-[2px] leading-4">
            Szerepkör: Belső Adminisztrátor&nbsp;&nbsp; Szerver: DEVELOPER_Teszt
          </span>
          <span className="flex flex-1 items-end justify-end border-l border-t border-[#a0a0a0]">
            <svg viewBox="0 0 12 12" className="h-3 w-3">
              <path d="M1 12 12 1M5 12l7-7M9 12l3-3" stroke="#8c8c8c" />
            </svg>
          </span>
        </div>
      </div>
      <PdfWindow />
    </div>
  );
};

export default App;
